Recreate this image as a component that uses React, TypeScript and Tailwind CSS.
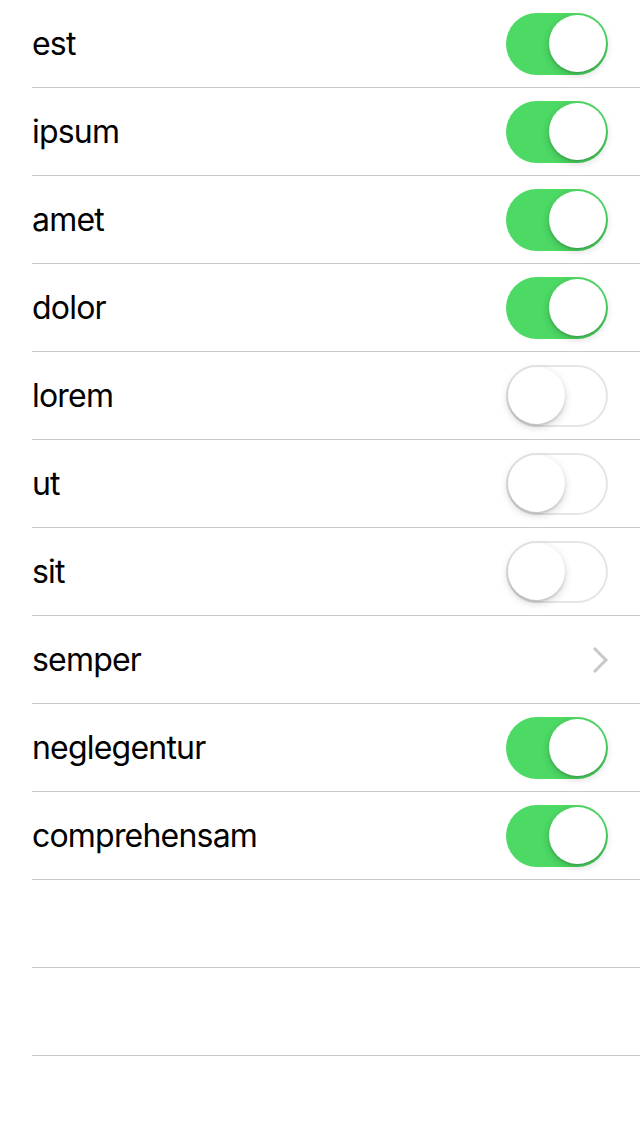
import React from "react"

type Row = { label: string; kind: "on" | "off" | "link" }

const rows: Row[] = [
    { label: "est", kind: "on" },
    { label: "ipsum", kind: "on" },
    { label: "amet", kind: "on" },
    { label: "dolor", kind: "on" },
    { label: "lorem", kind: "off" },
    { label: "ut", kind: "off" },
    { label: "sit", kind: "off" },
    { label: "semper", kind: "link" },
    { label: "neglegentur", kind: "on" },
    { label: "comprehensam", kind: "on" },
]

function Toggle({ on }: { on: boolean }) {
    return (
        <div
            className={
                on
                    ? "flex h-[62px] w-[102px] items-center justify-end rounded-full bg-[#4cd964] px-[2px]"
                    : "flex h-[62px] w-[102px] items-center justify-start rounded-full border-2 border-[#e5e5ea] bg-white px-0"
            }
        >
            <div className="size-[57px] rounded-full bg-white shadow-[0_3px_8px_rgba(0,0,0,0.18),0_2px_2px_rgba(0,0,0,0.12)]" />
        </div>
    )
}

function Chevron() {
    return (
        <svg width="18" height="30" viewBox="0 0 18 30" className="mr-[-1px]">
            <path d="M3 3 L15 15 L3 27" fill="none" stroke="#c7c7cc" strokeWidth="3" />
        </svg>
    )
}

export default function App() {
    return (
        <div className="min-h-[1136px] w-[640px] bg-white" style={{ fontFamily: "Inter, 'Liberation Sans', sans-serif" }}>
            <ul className="pl-[32px]">
                {rows.map((r) => (
                    <li key={r.label} className="flex h-[88px] items-center justify-between border-b border-[#c8c7cc] pr-[32px]">
                        <span className="text-[32px] tracking-[-0.8px] text-black">{r.label}</span>
                        {r.kind === "link" ? <Chevron /> : <Toggle on={r.kind === "on"} />}
                    </li>
                ))}
                <li className="h-[88px] border-b border-[#c8c7cc]" />
                <li className="h-[88px] border-b border-[#c8c7cc]" />
            </ul>
        </div>
    )
}
